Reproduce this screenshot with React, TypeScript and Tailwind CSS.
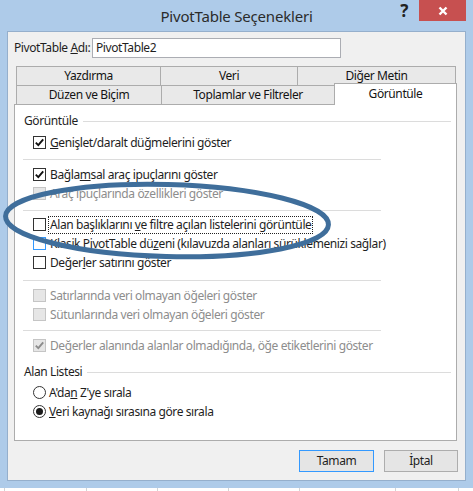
import type { ReactNode } from 'react'

type BoxState = 'on' | 'off' | 'disabled' | 'disabledOn' | 'hover'

function Check({ state }: { state: BoxState }) {
  const box =
    state === 'disabled' || state === 'disabledOn'
      ? 'border-[#c5c5c5] bg-[#e6e6e6]'
      : state === 'hover'
        ? 'border-[#3399ff] bg-white'
        : 'border-[#333333] bg-white'
  const showTick = state === 'on' || state === 'disabledOn'
  return (
    <span className={`flex h-[13px] w-[13px] shrink-0 items-center justify-center border ${box}`}>
      {showTick && (
        <svg width="11" height="11" viewBox="0 0 11 11">
          <path
            d="M1.8 5.6 L4.3 8.1 L9.2 2.4"
            fill="none"
            stroke={state === 'on' ? '#111' : '#8c8c8c'}
            strokeWidth="1.9"
          />
        </svg>
      )}
    </span>
  )
}

function Row({ state, children, focus }: { state: BoxState; children: ReactNode; focus?: boolean }) {
  const muted = state === 'disabled' || state === 'disabledOn'
  return (
    <div className="flex h-[19px] items-center pl-[18px]">
      <Check state={state} />
      <span
        className={`ml-[2px] whitespace-nowrap px-px leading-[16px] ${muted ? 'text-[#8d8d8d]' : 'text-[#1e1e1e]'} ${
          focus ? 'border border-dotted border-[#222]' : 'border border-transparent'
        }`}
      >
        {children}
      </span>
    </div>
  )
}

function Radio({ on, children }: { on?: boolean; children: ReactNode }) {
  return (
    <div className="flex h-[19px] items-center pl-[18px]">
      <span className="flex h-[13px] w-[13px] shrink-0 items-center justify-center rounded-full border border-[#333] bg-white">
        {on && <span className="h-[7px] w-[7px] rounded-full bg-[#1a1a1a]" />}
      </span>
      <span className="ml-[3px] whitespace-nowrap text-[#1e1e1e]">{children}</span>
    </div>
  )
}

function Sep({ top, bottom }: { top: string; bottom: string }) {
  return <div className={`ml-[8px] h-px w-[358px] bg-[#dcdcdc] ${top} ${bottom}`} />
}

function Group({ label, className }: { label: string; className?: string }) {
  return (
    <div className={`flex h-[16px] items-center pl-[9px] pr-[5px] ${className ?? ''}`}>
      <span className="whitespace-nowrap text-[#1e1e1e]">{label}</span>
      <span className="ml-[5px] h-px flex-1 bg-[#dcdcdc]" />
    </div>
  )
}

const tab = 'flex items-center justify-center border-x border-t border-[#acacac] bg-[#e9e9e9] text-[#141414]'

export default function App() {
  return (
    <div className="relative h-[491px] w-[473px] overflow-hidden font-['Noto_Sans',sans-serif] text-[12px] tracking-[-0.4px]">
      <div className="flex h-[488px] flex-col bg-[#aecbe9]">
        {/* title bar */}
        <div className="grid h-[31px] grid-cols-[1fr_auto_1fr]">
          <div />
          <div className="pt-[5px] text-[15px] tracking-[-0.2px] text-[#2b2b2b]">PivotTable Seçenekleri</div>
          <div className="flex items-start justify-end pr-[7px]">
            <span className="mt-[1px] mr-[11px] text-[17px] font-bold leading-[20px] text-[#222]">?</span>
            <div className="flex h-[21px] w-[47px] items-center justify-center bg-[#c75050]">
              <svg width="10" height="10" viewBox="0 0 10 10">
                <path d="M1.5 1.5 L8.5 8.5 M8.5 1.5 L1.5 8.5" stroke="#fff" strokeWidth="2.4" />
              </svg>
            </div>
          </div>
        </div>

        {/* client */}
        <div className="mx-[7px] flex h-[450px] flex-col border border-[#95afcc] bg-[#f0f0f0] pt-[6px]">
          <div className="flex h-[20px] items-center pl-[6px]">
            <span className="w-[78px] whitespace-nowrap text-[#1e1e1e]">
              PivotTable <span className="underline">A</span>dı:
            </span>
            <div className="flex h-[20px] w-[249px] items-center border border-[#abadb3] bg-white pl-[3px] text-[#1e1e1e]">
              PivotTable2
            </div>
          </div>

          {/* tabs */}
          <div className="mt-[8px] ml-[8px] flex h-[19px]">
            <div className={`${tab} w-[145px]`}>Yazdırma</div>
            <div className={`${tab} -ml-px w-[138px]`}>Veri</div>
            <div className={`${tab} -ml-px w-[159px]`}>Diğer Metin</div>
          </div>
          <div className="ml-[8px] flex h-[19px] items-start">
            <div className={`${tab} h-[19px] w-[146px]`}>Düzen ve Biçim</div>
            <div className={`${tab} -ml-px h-[19px] w-[174px]`}>Toplamlar ve Filtreler</div>
            <div className="relative z-10 -mt-[2px] -ml-px flex h-[22px] w-[123px] items-center justify-center border-x border-t border-[#acacac] bg-white pb-[2px] text-[#141414]">
              Görüntüle
            </div>
          </div>

          {/* panel */}
          <div className="ml-[6px] flex h-[337px] w-[443px] flex-col border border-[#acacac] bg-white pt-[8px]">
            <Group label="Görüntüle" />
            <div className="mt-[4px]" />
            <Row state="on">
              <span className="underline">G</span>enişlet/daralt düğmelerini göster
            </Row>
            <Sep top="mt-[7px]" bottom="mb-[5px]" />
            <Row state="on">
              Bağla<span className="underline">m</span>sal araç ipuçlarını göster
            </Row>
            <Row state="disabled">Araç ipuçlarında özellikleri göster</Row>
            <Sep top="mt-[7px]" bottom="mb-[4px]" />
            <Row state="off" focus>
              Alan başlıklarını <span className="underline">v</span>e filtre açılan listelerini görüntüle
            </Row>
            <Row state="hover">
              Klasik PivotTable dü<span className="underline">z</span>eni (kılavuzda alanları sürüklemenizi sağlar)
            </Row>
            <Row state="off">
              Değer<span className="underline">l</span>er satırını göster
            </Row>
            <Sep top="mt-[8px]" bottom="mb-[5px]" />
            <Row state="disabled">Satırlarında veri olmayan öğeleri göster</Row>
            <Row state="disabled">Sütunlarında veri olmayan öğeleri göster</Row>
            <Sep top="mt-[6px]" bottom="mb-[5px]" />
            <Row state="disabledOn">Değerler alanında alanlar olmadığında, öğe etiketlerini göster</Row>
            <Group label="Alan Listesi" className="mt-[9px]" />
            <div className="mt-[3px]" />
            <Radio>
              A'da<span className="underline">n</span> Z'ye sırala
            </Radio>
            <Radio on>
              <span className="underline">V</span>eri kaynağı sırasına göre sırala
            </Radio>
          </div>

          {/* buttons */}
          <div className="mt-[9px] flex justify-end gap-[10px] pr-[7px]">
            <button className="flex h-[22px] w-[75px] items-center justify-center border border-[#3399ff] bg-[#e5e5e5] text-[#1e1e1e]">
              Tamam
            </button>
            <button className="flex h-[22px] w-[74px] items-center justify-center border border-[#adadad] bg-[#e5e5e5] text-[#1e1e1e]">
              İptal
            </button>
          </div>
        </div>
      </div>

      {/* sheet behind the dialog */}
      <div className="flex h-[3px] bg-white">
        <div className="w-[5px] border-r border-[#d4d4d4]" />
        <div className="w-[82px] border-r border-[#d4d4d4]" />
        <div className="w-[71px] border-r border-[#d4d4d4]" />
        <div className="w-[71px] border-r border-[#d4d4d4]" />
        <div className="w-[71px] border-r border-[#d4d4d4]" />
        <div className="w-[96px] border-r border-[#d4d4d4]" />
        <div className="w-[63px] border-r border-[#d4d4d4]" />
      </div>

      {/* hand-drawn annotation */}
      <svg className="pointer-events-none absolute inset-0" width="473" height="491">
        <ellipse
          cx="167"
          cy="220.5"
          rx="161.5"
          ry="36"
          transform="rotate(1.5 167 220.5)"
          fill="none"
          stroke="#3f6e9b"
          strokeWidth="5"
        />
      </svg>
    </div>
  )
}
